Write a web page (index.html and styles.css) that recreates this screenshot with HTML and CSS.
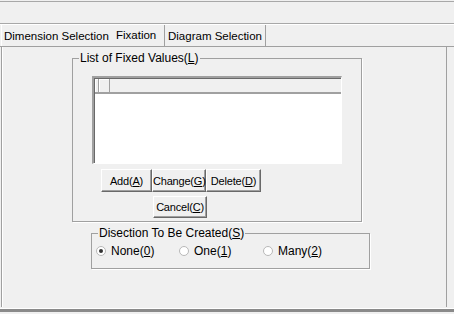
FILE: index.html
```html
<!DOCTYPE html>
<html lang="en">
<head>
    <meta charset="UTF-8">
    <title>Fixation</title>
    <link rel="stylesheet" href="styles.css">
</head>
<body>
    <div class="topbar"></div>
    <div class="tabs">
        <div class="tab first">Dimension Selection</div>
        <div class="tab active">Fixation</div>
        <div class="tab">Diagram Selection</div>
    </div>
    <div class="panel">
        <fieldset class="group fixed">
            <legend>List of Fixed Values(<u>L</u>)</legend>
            <div class="listbox">
                <div class="list-head">
                    <span class="col c1"></span>
                    <span class="col c2"></span>
                </div>
            </div>
            <div class="btn-row">
                <button class="btn add">Add(<u>A</u>)</button>
                <button class="btn change">Change(<u>G</u>)</button>
                <button class="btn delete">Delete(<u>D</u>)</button>
            </div>
            <div class="btn-row cancel-row">
                <button class="btn cancel">Cancel(<u>C</u>)</button>
            </div>
        </fieldset>

        <fieldset class="group dissect">
            <legend>Disection To Be Created(<u>S</u>)</legend>
            <div class="radios">
                <label class="radio"><span class="dot checked"></span><span>None(<u>0</u>)</span></label>
                <label class="radio"><span class="dot"></span><span>One(<u>1</u>)</span></label>
                <label class="radio"><span class="dot"></span><span>Many(<u>2</u>)</span></label>
            </div>
        </fieldset>
    </div>
    <div class="footer"></div>
</body>
</html>
```

FILE: styles.css
```css
body {
    margin: 0;
    padding: 0;
    background-color: #f0f0f0;
    font-family: "Liberation Sans", Arial, sans-serif;
    font-size: 12px;
    color: #000;
    width: 454px;
    height: 314px;
    overflow: hidden;
}
.topbar {
    margin-top: 1px;
    height: 21px;
    border-top: 1px solid #a8a8a8;
    border-bottom: 1px solid #a8a8a8;
    box-shadow: 0 1px 0 #fff;
}
.tabs {
    display: flex;
    height: 21px;
    margin-top: 1px;
    border-bottom: 1px solid #a0a0a0;
    font-size: 11.5px;
}
.tab {
    height: 21px;
    line-height: 23px;
    padding: 0 3px 0 2px;
    border-right: 1px solid #a0a0a0;
    white-space: nowrap;
}
.tab.first {
    margin-left: 1px;
    width: 105px;
    border-right: none;
    border-left: 1px solid #fff;
}
.tab.active {
    line-height: 20px;
    width: 45px;
    padding-left: 4px;
}
.tab:last-child {
    width: 94px;
    padding-left: 3px;
}
.panel {
    height: 260px;
    margin: 0 7px 0 1px;
    border-left: 1px solid #a0a0a0;
    border-right: 1px solid #a0a0a0;
    box-shadow: inset 1px 0 0 #fff;
    padding-top: 4px;
    box-sizing: border-box;
}
.group {
    margin: 0;
    padding: 0;
    border: 1px solid #a0a0a0;
    box-shadow: 1px 1px 0 #fff;
}
.group legend {
    margin-left: 6px;
    padding: 0 1px;
    line-height: 14px;
}
.fixed {
    margin-left: 70px;
    width: 288px;
    padding-bottom: 3px;
}
.listbox {
    margin: 11px 0 0 19px;
    width: 250px;
    height: 88px;
    background: #fff;
    border-top: 2px solid #a0a0a0;
    border-left: 2px solid #a0a0a0;
    border-right: 1px solid #fff;
    border-bottom: 1px solid #fff;
    box-shadow: inset 1px 1px 0 #696969;
    box-sizing: border-box;
}
.list-head {
    display: flex;
    height: 13px;
    margin-left: 1px;
    margin-top: 1px;
    background: #f0f0f0;
    border-bottom: 2px solid #a0a0a0;
}
.col {
    height: 13px;
    border-right: 1px solid #a0a0a0;
    box-shadow: inset 1px 1px 0 #fff;
}
.c1 {
    width: 3px;
}
.c2 {
    width: 10px;
}
.btn-row {
    display: flex;
    margin: 5px 0 0 28px;
}
.btn {
    font-family: "Liberation Sans", Arial, sans-serif;
    font-size: 11px;
    letter-spacing: -0.2px;
    padding: 0;
    height: 23px;
    background: #f0f0f0;
    border-top: 1px solid #fff;
    border-left: 1px solid #fff;
    border-right: 1px solid #696969;
    border-bottom: 1px solid #696969;
    box-shadow: inset -1px -1px 0 #a0a0a0;
    color: #000;
}
.add {
    width: 51px;
}
.change {
    width: 54px;
}
.delete {
    width: 55px;
}
.cancel-row {
    margin: 4px 0 0 80px;
}
.cancel {
    width: 54px;
    height: 22px;
}
.dissect {
    margin: 4px 0 0 89px;
    width: 277px;
    padding-bottom: 10px;
}
.radios {
    display: grid;
    grid-template-columns: 83px 84px auto;
    margin: 4px 0 0 4px;
}
.radio {
    display: flex;
    align-items: center;
    gap: 5px;
    height: 14px;
}
.dot {
    width: 8px;
    height: 8px;
    border-radius: 50%;
    border: 1px solid #b8b8b8;
    background: #fff;
    position: relative;
}
.dot.checked::after {
    content: "";
    position: absolute;
    left: 2px;
    top: 2px;
    width: 4px;
    height: 4px;
    border-radius: 50%;
    background: #333;
}
.footer {
    height: 3px;
    margin-top: 1px;
    border-top: 1px solid #fff;
    background: #8a8a8a;
}
```
